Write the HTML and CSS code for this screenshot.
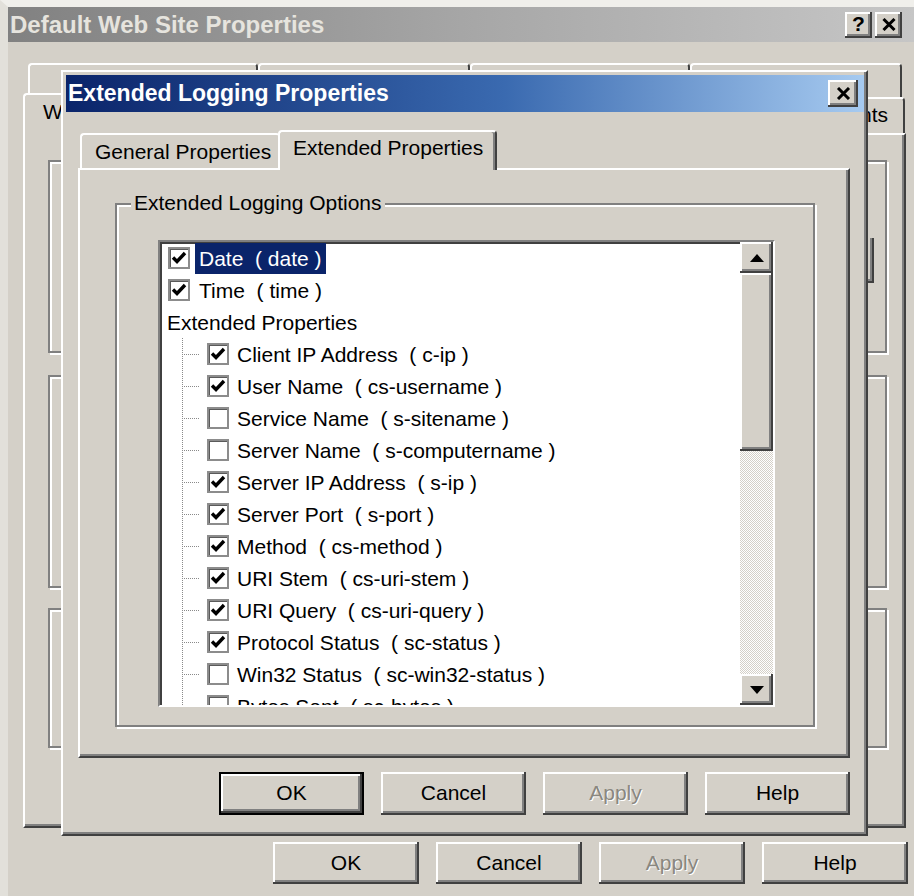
FILE: index.html
```html
<!DOCTYPE html>
<html lang="en">
<head>
<meta charset="utf-8">
<title>Default Web Site Properties</title>
<link rel="stylesheet" href="styles.css">
</head>
<body>
<div class="desk">

  <!-- Property sheet window (inactive, behind the logging dialog) -->
  <div class="props">
    <div class="caption inactive">
      <span class="caption-text">Default Web Site Properties</span>
      <span class="caption-btns">
        <span class="cbtn raised help-glyph">?</span>
        <span class="cbtn raised">
          <svg width="14" height="13" viewBox="0 0 14 13"><path d="M1.5 1 L12.5 12 M12.5 1 L1.5 12" stroke="#000" stroke-width="3" fill="none"/></svg>
        </span>
      </span>
    </div>

    <div class="props-body">
      <div class="tabrow tabrow-back">
        <span class="otab w230"></span>
        <span class="otab w212"></span>
        <span class="otab w220"></span>
        <span class="otab w212"></span>
      </div>
      <div class="tabrow tabrow-front">
        <span class="otab sel">Web Site</span>
        <span class="otab-gap"></span>
        <span class="otab docs">Documents</span>
      </div>

      <div class="opanel">
        <div class="ogroup g1"><span class="ogroup-ctl"></span></div>
        <div class="ogroup g2"></div>
        <div class="ogroup g3"></div>
      </div>

      <div class="btnrow props-btns">
        <span class="btn raised">OK</span>
        <span class="btn raised">Cancel</span>
        <span class="btn raised disabled">Apply</span>
        <span class="btn raised">Help</span>
      </div>
    </div>
  </div>

  <!-- Extended Logging Properties dialog -->
  <div class="dialog">
    <div class="caption active">
      <span class="caption-text">Extended Logging Properties</span>
      <span class="cbtn close raised">
        <svg width="15" height="13" viewBox="0 0 15 13"><path d="M2 1 L13 12 M13 1 L2 12" stroke="#000" stroke-width="3" fill="none"/></svg>
      </span>
    </div>

    <div class="dtabs">
      <span class="dtab">General Properties</span>
      <span class="dtab sel">Extended Properties</span>
    </div>

    <div class="dpanel">
      <div class="group">
        <span class="legend">Extended Logging Options</span>
        <div class="listbox">
          <div class="rows">
            <div class="row top">
              <span class="chk"><svg width="18" height="18" viewBox="0 0 18 18"><path d="M3 8.5 L7 12.5 L15 4" stroke="#000" stroke-width="3.4" fill="none"/></svg></span>
              <span class="label current">Date  ( date )</span>
            </div>
            <div class="row top">
              <span class="chk"><svg width="18" height="18" viewBox="0 0 18 18"><path d="M3 8.5 L7 12.5 L15 4" stroke="#000" stroke-width="3.4" fill="none"/></svg></span>
              <span class="label">Time  ( time )</span>
            </div>
            <div class="row head"><span class="label">Extended Properties</span></div>

            <div class="children">
              <div class="row child">
                <span class="branch"></span>
                <span class="chk"><svg width="18" height="18" viewBox="0 0 18 18"><path d="M3 8.5 L7 12.5 L15 4" stroke="#000" stroke-width="3.4" fill="none"/></svg></span>
                <span class="label">Client IP Address  ( c-ip )</span>
              </div>
              <div class="row child">
                <span class="branch"></span>
                <span class="chk"><svg width="18" height="18" viewBox="0 0 18 18"><path d="M3 8.5 L7 12.5 L15 4" stroke="#000" stroke-width="3.4" fill="none"/></svg></span>
                <span class="label">User Name  ( cs-username )</span>
              </div>
              <div class="row child">
                <span class="branch"></span>
                <span class="chk"></span>
                <span class="label">Service Name  ( s-sitename )</span>
              </div>
              <div class="row child">
                <span class="branch"></span>
                <span class="chk"></span>
                <span class="label">Server Name  ( s-computername )</span>
              </div>
              <div class="row child">
                <span class="branch"></span>
                <span class="chk"><svg width="18" height="18" viewBox="0 0 18 18"><path d="M3 8.5 L7 12.5 L15 4" stroke="#000" stroke-width="3.4" fill="none"/></svg></span>
                <span class="label">Server IP Address  ( s-ip )</span>
              </div>
              <div class="row child">
                <span class="branch"></span>
                <span class="chk"><svg width="18" height="18" viewBox="0 0 18 18"><path d="M3 8.5 L7 12.5 L15 4" stroke="#000" stroke-width="3.4" fill="none"/></svg></span>
                <span class="label">Server Port  ( s-port )</span>
              </div>
              <div class="row child">
                <span class="branch"></span>
                <span class="chk"><svg width="18" height="18" viewBox="0 0 18 18"><path d="M3 8.5 L7 12.5 L15 4" stroke="#000" stroke-width="3.4" fill="none"/></svg></span>
                <span class="label">Method  ( cs-method )</span>
              </div>
              <div class="row child">
                <span class="branch"></span>
                <span class="chk"><svg width="18" height="18" viewBox="0 0 18 18"><path d="M3 8.5 L7 12.5 L15 4" stroke="#000" stroke-width="3.4" fill="none"/></svg></span>
                <span class="label">URI Stem  ( cs-uri-stem )</span>
              </div>
              <div class="row child">
                <span class="branch"></span>
                <span class="chk"><svg width="18" height="18" viewBox="0 0 18 18"><path d="M3 8.5 L7 12.5 L15 4" stroke="#000" stroke-width="3.4" fill="none"/></svg></span>
                <span class="label">URI Query  ( cs-uri-query )</span>
              </div>
              <div class="row child">
                <span class="branch"></span>
                <span class="chk"><svg width="18" height="18" viewBox="0 0 18 18"><path d="M3 8.5 L7 12.5 L15 4" stroke="#000" stroke-width="3.4" fill="none"/></svg></span>
                <span class="label">Protocol Status  ( sc-status )</span>
              </div>
              <div class="row child">
                <span class="branch"></span>
                <span class="chk"></span>
                <span class="label">Win32 Status  ( sc-win32-status )</span>
              </div>
              <div class="row child">
                <span class="branch"></span>
                <span class="chk"></span>
                <span class="label">Bytes Sent  ( sc-bytes )</span>
              </div>
            </div>
          </div>

          <div class="vscroll">
            <span class="sb-btn raised">
              <svg width="14" height="8" viewBox="0 0 14 8"><polygon points="0,8 7,0 14,8" fill="#000"/></svg>
            </span>
            <span class="sb-thumb raised"></span>
            <span class="sb-track"></span>
            <span class="sb-btn raised">
              <svg width="14" height="8" viewBox="0 0 14 8"><polygon points="0,0 14,0 7,8" fill="#000"/></svg>
            </span>
          </div>
        </div>
      </div>
    </div>

    <div class="btnrow dialog-btns">
      <span class="btn raised default">OK</span>
      <span class="btn raised">Cancel</span>
      <span class="btn raised disabled">Apply</span>
      <span class="btn raised">Help</span>
    </div>
  </div>

</div>
</body>
</html>
```

FILE: styles.css
```css
* { box-sizing: border-box; }

html, body { margin: 0; padding: 0; }

body {
  width: 914px;
  height: 896px;
  overflow: hidden;
  background: #d4d0c8;
  font-family: "Liberation Sans", Arial, "DejaVu Sans", sans-serif;
  font-size: 21px;
  color: #000;
}

.desk {
  position: relative;
  width: 914px;
  height: 896px;
  overflow: hidden;
}

/* ---------- shared 3D edges ---------- */
.raised {
  background: #d4d0c8;
  box-shadow:
    inset -2px -2px 0 #404040,
    inset 2px 2px 0 #ffffff,
    inset -4px -4px 0 #808080;
}

/* ---------- captions ---------- */
.caption {
  display: flex;
  align-items: center;
  justify-content: space-between;
  height: 37px;
  padding-left: 2px;
  font-weight: bold;
  white-space: nowrap;
}

.caption.inactive {
  height: 35px;
  background: linear-gradient(to right, #818181 0%, #a6a6a6 50%, #c6c6c6 100%);
  color: #e6e4de;
  font-size: 24px;
}

.caption.active {
  background: linear-gradient(to right, #0a246a 0%, #3a6ab0 55%, #a6caf0 100%);
  color: #ffffff;
  font-size: 23px;
}

.caption-btns {
  display: flex;
  gap: 3px;
  margin-right: 12px;
}

.cbtn {
  display: flex;
  align-items: center;
  justify-content: center;
  width: 27px;
  height: 26px;
}

.help-glyph {
  font-size: 21px;
  font-weight: bold;
  color: #000;
  padding-bottom: 2px;
}

.cbtn.close {
  width: 30px;
  height: 27px;
  margin-right: 6px;
}

/* ---------- property sheet window ---------- */
.props {
  height: 896px;
  border-top: 7px solid #f0efeb;
  border-left: 8px solid #e2e0da;
}

.props-body {
  padding-left: 15px;
}

.tabrow {
  display: flex;
  align-items: flex-end;
}

.tabrow-back {
  height: 34px;
  margin: 21px 0 0 5px;
}

.tabrow-front {
  width: 882px;
  height: 36px;
}

.otab {
  display: flex;
  justify-content: center;
  align-items: center;
  height: 100%;
  border-top: 2px solid #ffffff;
  border-left: 2px solid #ffffff;
  border-right: 2px solid #404040;
  border-radius: 4px 4px 0 0;
  background: #d4d0c8;
  white-space: nowrap;
  overflow: hidden;
}

.otab.w230 { width: 230px; }
.otab.w212 { width: 212px; }
.otab.w220 { width: 220px; }

.otab.sel {
  position: relative;
  z-index: 1;
  justify-content: flex-start;
  width: 217px;
  height: 42px;
  margin-bottom: -2px;
  padding: 0 0 6px 18px;
}

.otab-gap { flex: 1; }

.otab.docs {
  width: 140px;
  padding-bottom: 2px;
}

.opanel {
  display: flex;
  flex-direction: column;
  width: 883px;
  height: 695px;
  padding: 25px 17px 0 23px;
  border: 2px solid;
  border-color: #ffffff #404040 #404040 #ffffff;
  box-shadow: inset -2px -2px 0 #808080;
}

.ogroup {
  border: 2px solid #808080;
  box-shadow: inset 2px 2px 0 #ffffff, 2px 2px 0 #ffffff;
}

.ogroup.g1 {
  height: 193px;
  margin-bottom: 22px;
  display: flex;
  justify-content: flex-end;
  align-items: flex-start;
}

.ogroup.g2 { height: 213px; margin-bottom: 20px; }
.ogroup.g3 { height: 140px; }

.ogroup-ctl {
  width: 10px;
  height: 45px;
  margin: 76px 11px 0 0;
  border-right: 2px solid #404040;
  border-bottom: 2px solid #404040;
  box-shadow: inset -2px -2px 0 #808080;
}

/* ---------- buttons ---------- */
.btnrow {
  display: flex;
  justify-content: flex-end;
  gap: 17px;
}

.props-btns {
  margin-top: 14px;
  padding-right: 6px;
}

.btn {
  display: flex;
  align-items: center;
  justify-content: center;
  width: 146px;
  height: 42px;
  padding-bottom: 1px;
}

.btn.disabled {
  color: #8a877f;
  text-shadow: 1px 1px 0 #ffffff;
}

.btn.default {
  border: 2px solid #000;
}

/* ---------- logging dialog ---------- */
.dialog {
  position: absolute;
  z-index: 5;
  left: 61px;
  top: 70px;
  width: 807px;
  height: 766px;
  padding: 3px 2px 0 3px;
  background: #d4d0c8;
  border: 2px solid;
  border-color: #ffffff #404040 #404040 #ffffff;
  box-shadow: inset -2px -2px 0 #808080;
}

.dtabs {
  display: flex;
  align-items: flex-end;
  height: 56px;
  padding-left: 14px;
}

.dtab {
  display: block;
  height: 35px;
  padding: 1px 0 0 13px;
  line-height: 32px;
  border-top: 2px solid #ffffff;
  border-left: 2px solid #ffffff;
  border-radius: 4px 4px 0 0;
  background: #d4d0c8;
  white-space: nowrap;
}

.dtab:first-child { width: 200px; }

.dtab.sel {
  position: relative;
  z-index: 1;
  width: 219px;
  height: 40px;
  margin-left: -2px;
  margin-bottom: -2px;
  padding-top: 0;
  border-right: 2px solid #404040;
  box-shadow: inset -2px 0 0 #808080;
}

.dpanel {
  display: flex;
  width: 772px;
  height: 590px;
  margin-left: 12px;
  padding: 33px 33px 29px 35px;
  border: 2px solid;
  border-color: #ffffff #404040 #404040 #ffffff;
  box-shadow: inset -2px -2px 0 #808080;
}

.group {
  flex: 1;
  display: flex;
  flex-direction: column;
  border: 2px solid #808080;
  box-shadow: inset 2px 2px 0 #ffffff, 2px 2px 0 #ffffff;
}

.legend {
  align-self: flex-start;
  height: 24px;
  line-height: 24px;
  margin: -14px 0 0 14px;
  padding: 0 3px;
  background: #d4d0c8;
  white-space: nowrap;
}

.listbox {
  flex: 1;
  display: flex;
  min-height: 0;
  margin: 25px 38px 18px 41px;
  border: 2px solid;
  border-color: #808080 #ffffff #ffffff #808080;
  background: #ffffff;
}

.rows {
  flex: 1;
  overflow: hidden;
  box-shadow: inset 2px 2px 0 #404040;
}

.row {
  display: flex;
  align-items: center;
  height: 32px;
  white-space: pre;
}

.row.top { padding-left: 8px; }
.row.head { padding-left: 3px; }

.label {
  height: 31px;
  line-height: 31px;
  padding: 0 4px;
}

.row.top .label { margin-left: 5px; }
.row.child .label { margin-left: 4px; }

.label.current {
  background: #0a246a;
  color: #ffffff;
}

.chk {
  display: flex;
  align-items: center;
  justify-content: center;
  flex: none;
  width: 22px;
  height: 22px;
  background: #ffffff;
  border: 2px solid #8c8c8c;
  box-shadow: inset 1px 1px 0 #5a5a5a;
}

/* tree connectors */
.children {
  background-image: repeating-linear-gradient(to bottom, #8a8a8a 0 1px, transparent 1px 2px);
  background-size: 1px 100%;
  background-position: 22px 0;
  background-repeat: no-repeat;
}

.branch {
  flex: none;
  width: 18px;
  height: 1px;
  margin: 0 7px 0 22px;
  background: repeating-linear-gradient(to right, #8a8a8a 0 1px, transparent 1px 2px);
}

/* scroll bar */
.vscroll {
  display: flex;
  flex-direction: column;
  width: 33px;
  flex: none;
}

.sb-btn {
  display: flex;
  align-items: center;
  justify-content: center;
  height: 31px;
  flex: none;
}

.sb-thumb {
  height: 178px;
  flex: none;
}

.sb-track {
  flex: 1;
  background: repeating-conic-gradient(#d4d0c8 0 25%, #ffffff 0 50%) 0 0 / 2px 2px;
}

.dialog-btns {
  margin-top: 14px;
  margin-right: 14px;
}

.dialog-btns .btn {
  width: 145px;
  height: 43px;
}
```
